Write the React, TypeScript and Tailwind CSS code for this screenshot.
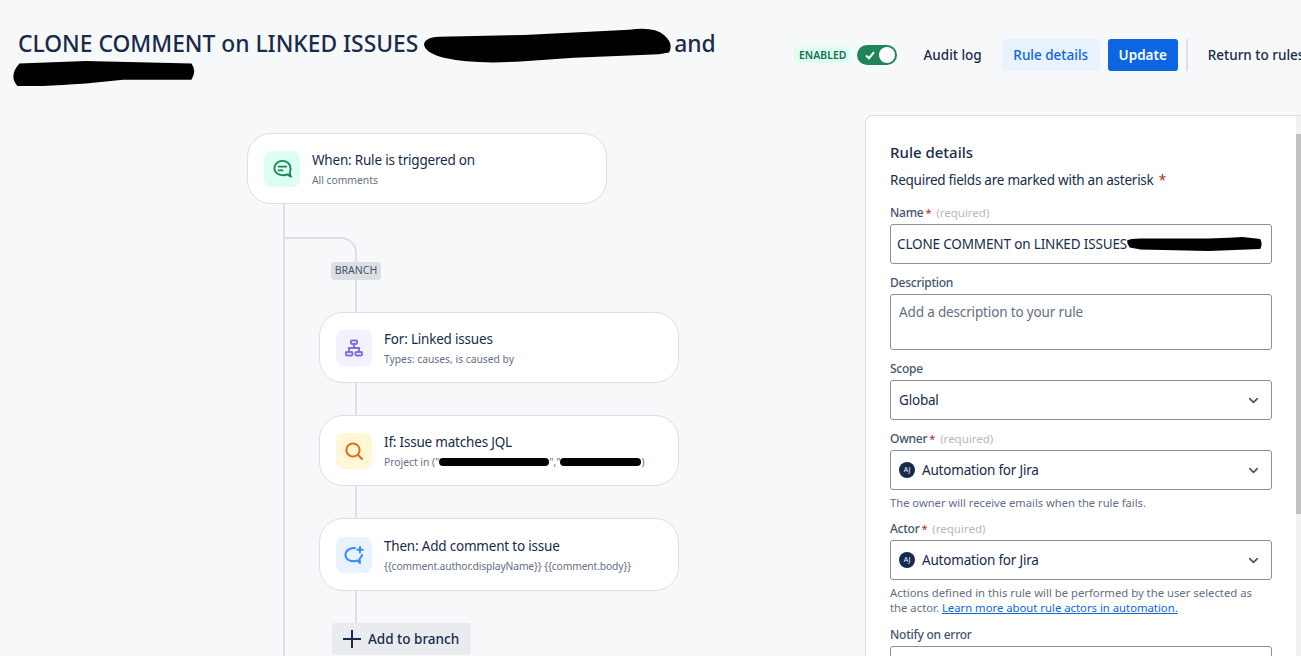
import { ChevronDown } from "lucide-react";
import type { ReactNode } from "react";

const font = { fontFamily: '"Noto Sans", "Open Sans", sans-serif' };

const Blob = ({ d, className }: { d: string; className: string }) => (
  <svg viewBox="0 0 100 20" preserveAspectRatio="none" className={className}>
    <path d={d} fill="#000" />
  </svg>
);

const NodeCard = ({
  icon,
  iconBg,
  title,
  sub,
  className,
}: {
  icon: ReactNode;
  iconBg: string;
  title: string;
  sub: ReactNode;
  className: string;
}) => (
  <div className={`w-[360px] flex items-center gap-3 rounded-[24px] border border-[#dcdfe4] bg-white pl-4 ${className}`}>
    <div className={`flex h-9 w-9 shrink-0 items-center justify-center rounded-lg ${iconBg}`}>{icon}</div>
    <div className="flex flex-col gap-[2px]">
      <div className="text-[13.5px] leading-5 tracking-[-0.2px] text-[#172b4d]">{title}</div>
      <div className="text-[10.3px] leading-4 text-[#626f86]">{sub}</div>
    </div>
  </div>
);

const Label = ({ text, required }: { text: string; required?: boolean }) => (
  <div className="flex h-4 items-center text-[12px] font-medium tracking-[-0.25px] text-[#44546f]">
    {text}
    {required && (
      <>
        <span className="ml-[2px] text-[11px] font-normal text-[#ae2a19]">*</span>
        <span className="ml-[5px] text-[11.5px] font-normal tracking-normal text-[#b3b9c4]">(required)</span>
      </>
    )}
  </div>
);

const SelectBox = ({ children, className = "" }: { children: ReactNode; className?: string }) => (
  <div className={`mt-[3px] flex h-10 items-center justify-between rounded-[3px] border border-[#8590a2] bg-white pl-2 pr-[10px] text-[13.5px] tracking-[-0.2px] text-[#172b4d] ${className}`}>
    <div className="flex items-center gap-[7px]">{children}</div>
    <ChevronDown size={15} strokeWidth={2.6} className="text-[#44546f]" />
  </div>
);

const Owner = () => (
  <>
    <span className="flex h-4 w-4 items-center justify-center rounded-full bg-[#172b4d] text-[7px] tracking-normal text-white">AJ</span>
    <span>Automation for Jira</span>
  </>
);

export default function App() {
  return (
    <div style={font} className="flex h-[656px] w-[1301px] flex-col overflow-hidden bg-[#f7f8f9] text-[#172b4d]">
      {/* header */}
      <div className="flex h-[115px] shrink-0">
        <h1 className="w-[776px] shrink-0 pl-[18px] pt-[28px] text-[22.8px] font-medium leading-[28px] text-[#172b4d]">
          CLONE COMMENT on LINKED ISSUES{" "}
          <Blob
            d="M0 9 Q1 5 6 5 L40 4 L82 1 Q92 -1 96 4 Q100 9 98 14 L94 15 L60 17 L40 19 Q20 21 8 17 Q0 14 0 9Z"
            className="inline-block h-[35px] w-[250px] align-middle"
          />
          and
          <br />
          <Blob
            d="M4 2 L40 0 L97 2 Q100 8 97 15 L60 15 L40 18 Q12 21 3 20 Q-2 12 4 2Z"
            className="-ml-[6px] -mt-[2px] block h-[25px] w-[185px]"
          />
        </h1>
        <div className="flex h-[32px] shrink-0 items-center mt-[39px] ml-[18px]">
          <span className="rounded-[3px] bg-[#dcfff1] px-[5px] text-[10.5px] font-semibold leading-4 text-[#216e4e]">ENABLED</span>
          <div className="ml-[6px] flex h-5 w-10 items-center justify-between rounded-full bg-[#1f845a] pl-[7px] pr-[2px]">
            <svg viewBox="0 0 12 12" className="h-3 w-3">
              <path d="M2 6.5 L5 9.2 L10 3.2" fill="none" stroke="#fff" strokeWidth="2" />
            </svg>
            <span className="h-4 w-4 rounded-full bg-white" />
          </div>
          <span className="ml-[26px] text-[13.5px] font-medium text-[#172b4d]">Audit log</span>
          <span className="ml-5 flex h-8 w-[98px] items-center justify-center rounded-[3px] bg-[#e9f2ff] text-[13.5px] font-medium text-[#0c66e4]">Rule details</span>
          <span className="ml-2 flex h-8 w-[70px] items-center justify-center rounded-[3px] bg-[#0c66e4] text-[13.5px] font-semibold text-white">Update</span>
          <span className="ml-2 h-8 w-[2px] bg-[#dcdfe4]" />
          <span className="ml-5 whitespace-nowrap text-[13.5px] font-medium text-[#172b4d]">Return to rules</span>
        </div>
      </div>

      <div className="flex min-h-0 flex-1">
        {/* rule canvas */}
        <div className="w-[865px] shrink-0 pl-[247px] pt-[18px]">
          <NodeCard
            className="h-[71px]"
            iconBg="bg-[#dcfff1]"
            title="When: Rule is triggered on"
            sub="All comments"
            icon={
              <svg viewBox="0 0 20 20" className="h-[19px] w-[19px]" fill="none" stroke="#1f845a" strokeWidth="2" strokeLinecap="round">
                <path d="M15 16.2 C11 18 2 17 1.5 10 C1.5 5 5.5 2 10 2 C14.5 2 18.5 5 18.5 10 C18.5 12 18 14 17.5 15.5 L19 18.5 Z" strokeLinejoin="round" />
                <path d="M6 8 H14 M6 12 H10" />
              </svg>
            }
          />
          <div className="ml-[36px] h-[500px] border-l-2 border-[#dcdfe4]">
            <div className="h-[33px]" />
            <div className="h-[25px] w-[72px] rounded-tr-[16px] border-r-2 border-t-2 border-[#dcdfe4]" />
            <div className="ml-[46px] flex h-[18px] w-[50px] items-center justify-center rounded-[3px] bg-[#dcdfe4] text-[10.5px] text-[#44546f]">BRANCH</div>
            <div className="ml-[70px] h-[32px] w-[2px] bg-[#dcdfe4]" />
            <NodeCard
              className="ml-[34px] h-[71px]"
              iconBg="bg-[#f3f0ff]"
              title="For: Linked issues"
              sub="Types: causes, is caused by"
              icon={
                <svg viewBox="0 0 20 20" className="h-5 w-5" fill="none" stroke="#8270db" strokeWidth="2">
                  <rect x="7" y="2.5" width="6" height="3.4" rx="0.8" />
                  <rect x="2" y="14" width="6.5" height="3.4" rx="0.8" />
                  <rect x="11.5" y="14" width="6.5" height="3.4" rx="0.8" />
                  <path d="M10 6 V10 M5 14 V10 H15 V14" />
                </svg>
              }
            />
            <div className="ml-[70px] h-[32px] w-[2px] bg-[#dcdfe4]" />
            <NodeCard
              className="ml-[34px] h-[71px]"
              iconBg="bg-[#fff7d6]"
              title="If: Issue matches JQL"
              sub={
                <span className="flex items-center">
                  Project in ("
                  <span className="h-[8px] w-[110px] rounded-full bg-black" />
                  ","
                  <span className="h-[8px] w-[81px] rounded-full bg-black" />)
                </span>
              }
              icon={
                <svg viewBox="0 0 20 20" className="h-5 w-5" fill="none" stroke="#e56910" strokeWidth="2" strokeLinecap="round">
                  <circle cx="9" cy="9" r="6.6" />
                  <path d="M14 14 L18 18" />
                </svg>
              }
            />
            <div className="ml-[70px] h-[32px] w-[2px] bg-[#dcdfe4]" />
            <NodeCard
              className="ml-[34px] h-[73px]"
              iconBg="bg-[#e9f2ff]"
              title="Then: Add comment to issue"
              sub={<span className="tracking-[-0.13px]">{"{{comment.author.displayName}} {{comment.body}}"}</span>}
              icon={
                <svg viewBox="0 0 20 20" className="h-5 w-5" fill="none" stroke="#388bff" strokeWidth="2" strokeLinecap="round">
                  <path d="M11 3 C6 2.5 1.5 5.5 1.5 10 C1.5 15 8 17.5 13.5 15.5 L16 18 L15.5 14 C17 12.5 17.8 11.5 18 10" strokeLinejoin="round" />
                  <path d="M16 2 V7.5 M13.2 4.8 H18.8" />
                </svg>
              }
            />
            <div className="ml-[70px] h-[32px] w-[2px] bg-[#dcdfe4]" />
            <div className="ml-[47px] flex h-8 w-[139px] items-center gap-[7px] rounded-[3px] bg-[#e9ebee] pl-[11px] text-[13.5px] font-medium text-[#172b4d]">
              <svg viewBox="0 0 18 18" className="h-[18px] w-[18px]" fill="none" stroke="#172b4d" strokeWidth="2">
                <path d="M9 0 V18 M0 9 H18" />
              </svg>
              Add to branch
            </div>
          </div>
        </div>

        {/* rule details panel */}
        <div className="flex min-w-0 flex-1 rounded-tl-lg border-l border-t border-[#dcdfe4] bg-white">
          <div className="w-[430px] shrink-0 pl-[24px] pt-[26px]">
            <div className="w-[382px]">
              <div className="text-[15px] font-medium leading-5 text-[#172b4d]">Rule details</div>
              <div className="mt-2 text-[13.5px] leading-5 tracking-[-0.25px] text-[#172b4d]">
                Required fields are marked with an asterisk <span className="ml-[2px] text-[#ae2a19]">*</span>
              </div>
              <div className="mt-[15px]"><Label text="Name" required /></div>
              <div className="mt-[3px] flex h-10 items-center rounded-[3px] border border-[#8590a2] bg-white pl-[6px] text-[13.5px] tracking-[-0.15px] text-[#172b4d]">
                <span className="whitespace-nowrap">CLONE COMMENT on LINKED ISSUES</span>
                <Blob
                  d="M0 5 Q2 2 10 2 L60 2 L75 1 L85 0 L98 3 Q100 10 98 17 L60 20 L10 18 L2 15 Q0 10 0 5Z"
                  className="h-[14px] w-[136px]"
                />
              </div>
              <div className="mt-[11px]"><Label text="Description" /></div>
              <div className="mt-[3px] h-[56px] rounded-[3px] border border-[#8590a2] bg-white pl-2 pt-2 text-[13.5px] leading-[18px] tracking-[-0.15px] text-[#626f86]">
                Add a description to your rule
              </div>
              <div className="mt-[11px]"><Label text="Scope" /></div>
              <SelectBox>Global</SelectBox>
              <div className="mt-[11px]"><Label text="Owner" required /></div>
              <SelectBox><Owner /></SelectBox>
              <div className="mt-[5px] text-[11.2px] leading-4 text-[#626f86]">The owner will receive emails when the rule fails.</div>
              <div className="mt-[10px]"><Label text="Actor" required /></div>
              <SelectBox><Owner /></SelectBox>
              <div className="mt-[5px] text-[11.3px] leading-[15px] text-[#626f86]">
                Actions defined in this rule will be performed by the user selected as
                <br />
                the actor. <span className="text-[#0c66e4] underline">Learn more about rule actors in automation.</span>
              </div>
              <div className="mt-[12px]"><Label text="Notify on error" /></div>
              <div className="mt-[3px] h-10 rounded-[3px] border border-[#8590a2] bg-white" />
            </div>
          </div>
          {/* scrollbar */}
          <div className="flex-1 bg-[#f1f1f1] pt-[18px]">
            <div className="h-[380px] bg-[#c1c1c1]" />
          </div>
        </div>
      </div>
    </div>
  );
}
